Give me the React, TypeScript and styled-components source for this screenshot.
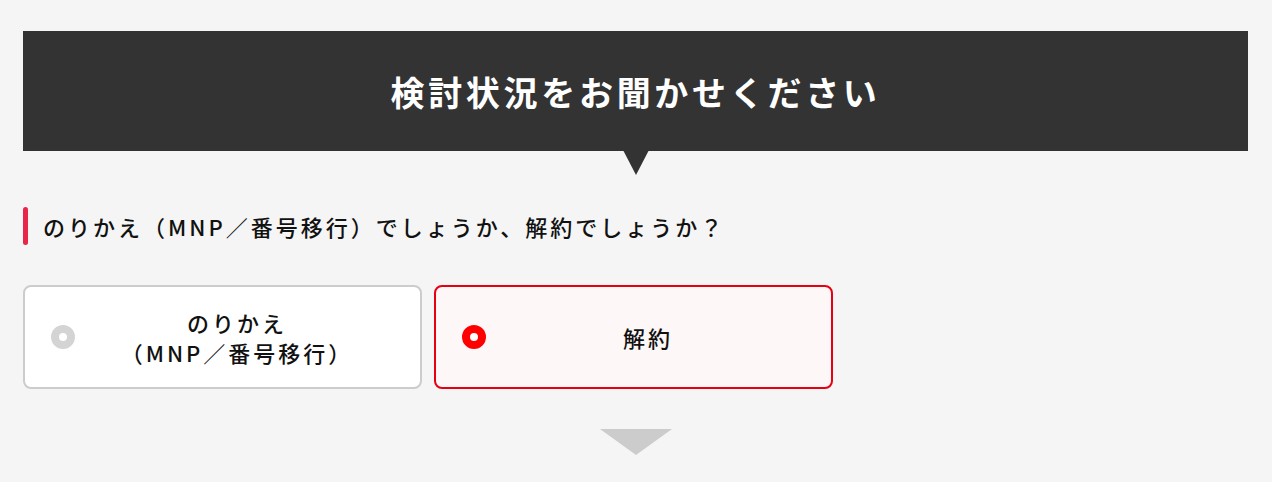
import styled, { createGlobalStyle } from "styled-components"

const GlobalStyle = createGlobalStyle`
  html, body {
    margin: 0;
    padding: 0;
    background: #f5f5f5;
  }
  body {
    font-family: "Noto Sans CJK JP", "Noto Sans", sans-serif;
    color: #111;
  }
`

interface Choice {
  id: string
  lines: string[]
}

const choices: Choice[] = [
  { id: "mnp", lines: ["のりかえ", "（MNP／番号移行）"] },
  { id: "cancel", lines: ["解約"] },
]

const selectedId = "cancel"

export default function App() {
  return (
    <>
      <GlobalStyle />
      <Page>
        <Heading>
          <HeadingText>検討状況をお聞かせください</HeadingText>
        </Heading>

        <Question>のりかえ（MNP／番号移行）でしょうか、解約でしょうか？</Question>

        <Options>
          {choices.map((choice) => {
            const active = choice.id === selectedId
            return (
              <OptionCard key={choice.id} $active={active}>
                <Radio $active={active} />
                <OptionLabel>
                  {choice.lines.map((line) => (
                    <span key={line}>{line}</span>
                  ))}
                </OptionLabel>
              </OptionCard>
            )
          })}
        </Options>

        <NextArrow />
      </Page>
    </>
  )
}

const Page = styled.div`
  padding: 31px 24px 0 23px;
  display: flex;
  flex-direction: column;
`

const Heading = styled.div`
  position: relative;
  height: 120px;
  background: #333333;
  display: flex;
  align-items: center;
  justify-content: center;

  &::after {
    content: "";
    position: absolute;
    left: 50%;
    bottom: -24px;
    transform: translateX(-50%);
    border-left: 13px solid transparent;
    border-right: 13px solid transparent;
    border-top: 25px solid #333333;
  }
`

const HeadingText = styled.h2`
  margin: 0;
  color: #fff;
  font-size: 34px;
  font-weight: 700;
  letter-spacing: 3.7px;
`

const Question = styled.p`
  position: relative;
  margin: 56px 0 0;
  padding-left: 20px;
  font-size: 22px;
  font-weight: 500;
  line-height: 38px;
  letter-spacing: 3px;

  &::before {
    content: "";
    position: absolute;
    left: 0;
    top: 0;
    bottom: 0;
    width: 5px;
    border-radius: 3px;
    background: #e8264a;
  }
`

const Options = styled.div`
  display: grid;
  grid-template-columns: 399px 399px;
  gap: 12px;
  margin-top: 40px;
`

const OptionCard = styled.label<{ $active: boolean }>`
  display: flex;
  align-items: center;
  box-sizing: border-box;
  height: 104px;
  padding: 0 21px 0 26px;
  border: 2px solid ${({ $active }) => ($active ? "#e60012" : "#cccccc")};
  border-radius: 8px;
  background: ${({ $active }) => ($active ? "#fdf7f7" : "#ffffff")};
  cursor: pointer;
`

const Radio = styled.span<{ $active: boolean }>`
  flex: none;
  box-sizing: border-box;
  width: 24px;
  height: 24px;
  border-radius: 50%;
  border: 8px solid ${({ $active }) => ($active ? "#ff0000" : "#d4d4d4")};
  background: #fff;
`

const OptionLabel = styled.span`
  flex: 1;
  display: flex;
  flex-direction: column;
  align-items: center;
  font-size: 22px;
  font-weight: 500;
  line-height: 30px;
  letter-spacing: 3px;
`

const NextArrow = styled.div`
  align-self: center;
  margin-top: 40px;
  width: 0;
  height: 0;
  border-left: 36px solid transparent;
  border-right: 36px solid transparent;
  border-top: 26px solid #cccccc;
`
